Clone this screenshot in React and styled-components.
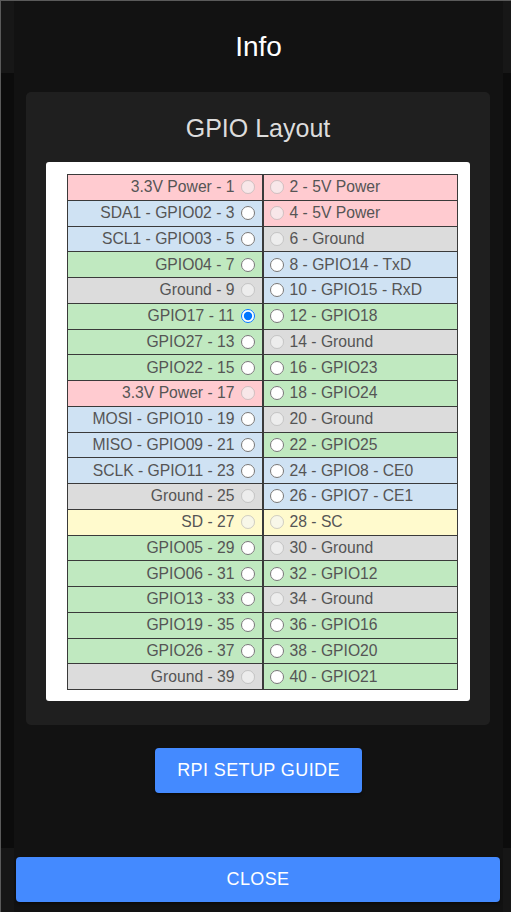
import styled, { createGlobalStyle } from 'styled-components'

const GlobalStyle = createGlobalStyle`
  html, body {
    margin: 0;
    padding: 0;
    height: 100%;
    background: #0c0c0c;
    font-family: "Liberation Sans", Arial, sans-serif;
  }
  #root {
    height: 100%;
  }
`

const pins = [
  ['3.3V Power', 'power', true, '5V Power', 'power', true],
  ['SDA1 - GPIO02', 'i2c', false, '5V Power', 'power', true],
  ['SCL1 - GPIO03', 'i2c', false, 'Ground', 'ground', true],
  ['GPIO04', 'gpio', false, 'GPIO14 - TxD', 'i2c', false],
  ['Ground', 'ground', true, 'GPIO15 - RxD', 'i2c', false],
  ['GPIO17', 'gpio', false, 'GPIO18', 'gpio', false],
  ['GPIO27', 'gpio', false, 'Ground', 'ground', true],
  ['GPIO22', 'gpio', false, 'GPIO23', 'gpio', false],
  ['3.3V Power', 'power', true, 'GPIO24', 'gpio', false],
  ['MOSI - GPIO10', 'i2c', false, 'Ground', 'ground', true],
  ['MISO - GPIO09', 'i2c', false, 'GPIO25', 'gpio', false],
  ['SCLK - GPIO11', 'i2c', false, 'GPIO8 - CE0', 'i2c', false],
  ['Ground', 'ground', true, 'GPIO7 - CE1', 'i2c', false],
  ['SD', 'eeprom', true, 'SC', 'eeprom', true],
  ['GPIO05', 'gpio', false, 'Ground', 'ground', true],
  ['GPIO06', 'gpio', false, 'GPIO12', 'gpio', false],
  ['GPIO13', 'gpio', false, 'Ground', 'ground', true],
  ['GPIO19', 'gpio', false, 'GPIO16', 'gpio', false],
  ['GPIO26', 'gpio', false, 'GPIO20', 'gpio', false],
  ['Ground', 'ground', true, 'GPIO21', 'gpio', false],
]

const colors = {
  power: '#ffcbd0',
  i2c: '#cfe2f3',
  ground: '#dcdcdc',
  gpio: '#c0e9c0',
  eeprom: '#fffacd',
}

const Backdrop = styled.div`
  height: 100%;
  display: flex;
  flex-direction: column;
  border-top: 1px solid #5a5a5a;
  border-left: 1px solid #5a5a5a;
  box-sizing: border-box;
`

const PageHeader = styled.div`
  height: 72px;
  background: #171717;
`

const PageMain = styled.div`
  flex: 1;
  background: #0c0c0c;
`

const PageFooter = styled.div`
  height: 64px;
  background: #161616;
`

const Dialog = styled.div`
  position: fixed;
  top: 1px;
  bottom: 0;
  left: 14px;
  right: 8px;
  background: #121212;
  display: flex;
  flex-direction: column;
  align-items: center;
`

const Title = styled.h2`
  margin: 0;
  height: 91px;
  line-height: 92px;
  font-size: 28px;
  font-weight: 400;
  color: #fff;
  text-align: center;
`

const Card = styled.div`
  align-self: stretch;
  margin: 0 13px 0 12px;
  background: #1f1f1f;
  border-radius: 5px;
  padding: 0 20px 24px 20px;
`

const CardTitle = styled.h3`
  margin: 0;
  height: 70px;
  line-height: 72px;
  font-size: 25px;
  font-weight: 400;
  color: #dcdcdc;
  text-align: center;
`

const Panel = styled.div`
  background: #fff;
  border-radius: 3px;
  padding: 12px 12px 11px 21px;
`

const Table = styled.table`
  width: 391px;
  border-collapse: collapse;
  font-family: "Liberation Sans", Arial, sans-serif;
  font-size: 15.7px;
  color: #555;
`

const Row = styled.tr`
  height: 25.75px;
`

const Cell = styled.td`
  background: ${p => colors[p.$kind]};
  border: 1px solid #3a3a3a;
  padding: 0 4px;
  width: 50%;
  text-align: ${p => (p.$side === 'left' ? 'right' : 'left')};
  white-space: nowrap;
  line-height: 18px;
  ${p => (p.$side === 'left' ? 'border-right-width: 2px;' : '')}
`

const Radio = styled.input`
  width: 14px;
  height: 14px;
  margin: 0 ${p => (p.$side === 'left' ? '3px' : '6px')} 0 ${p => (p.$side === 'left' ? '6px' : '2px')};
  vertical-align: -2px;
`

const Button = styled.button`
  border: none;
  border-radius: 4px;
  background: #448aff;
  color: #fff;
  font-family: "Liberation Sans", Arial, sans-serif;
  font-size: 18px;
  letter-spacing: 0.4px;
  text-transform: uppercase;
  height: 45px;
  padding: 0 22px;
  box-shadow: 0 2px 3px rgba(0, 0, 0, 0.4);
`

const GuideButton = styled(Button)`
  margin-top: 23px;
`

const Spacer = styled.div`
  flex: 1;
`

const CloseButton = styled(Button)`
  align-self: stretch;
  margin: 0 3px 10px 2px;
`

function PinCell ({ side, label, kind, disabled, checked }) {
  const radio = (
    <Radio type="radio" name="pin" $side={side} disabled={disabled} defaultChecked={checked} />
  )
  return (
    <Cell $side={side} $kind={kind}>
      {side === 'right' && radio}
      {label}
      {side === 'left' && radio}
    </Cell>
  )
}

function App () {
  return (
    <>
      <GlobalStyle />
      <Backdrop>
        <PageHeader />
        <PageMain />
        <PageFooter />
      </Backdrop>
      <Dialog>
        <Title>Info</Title>
        <Card>
          <CardTitle>GPIO Layout</CardTitle>
          <Panel>
            <Table>
              <tbody>
                {pins.map((p, i) => {
                  const left = i * 2 + 1
                  const right = i * 2 + 2
                  return (
                    <Row key={i}>
                      <PinCell side="left" label={`${p[0]} - ${left}`} kind={p[1]} disabled={p[2]} checked={left === 11} />
                      <PinCell side="right" label={`${right} - ${p[3]}`} kind={p[4]} disabled={p[5]} />
                    </Row>
                  )
                })}
              </tbody>
            </Table>
          </Panel>
        </Card>
        <GuideButton>RPI Setup Guide</GuideButton>
        <Spacer />
        <CloseButton>Close</CloseButton>
      </Dialog>
    </>
  )
}

export default App
